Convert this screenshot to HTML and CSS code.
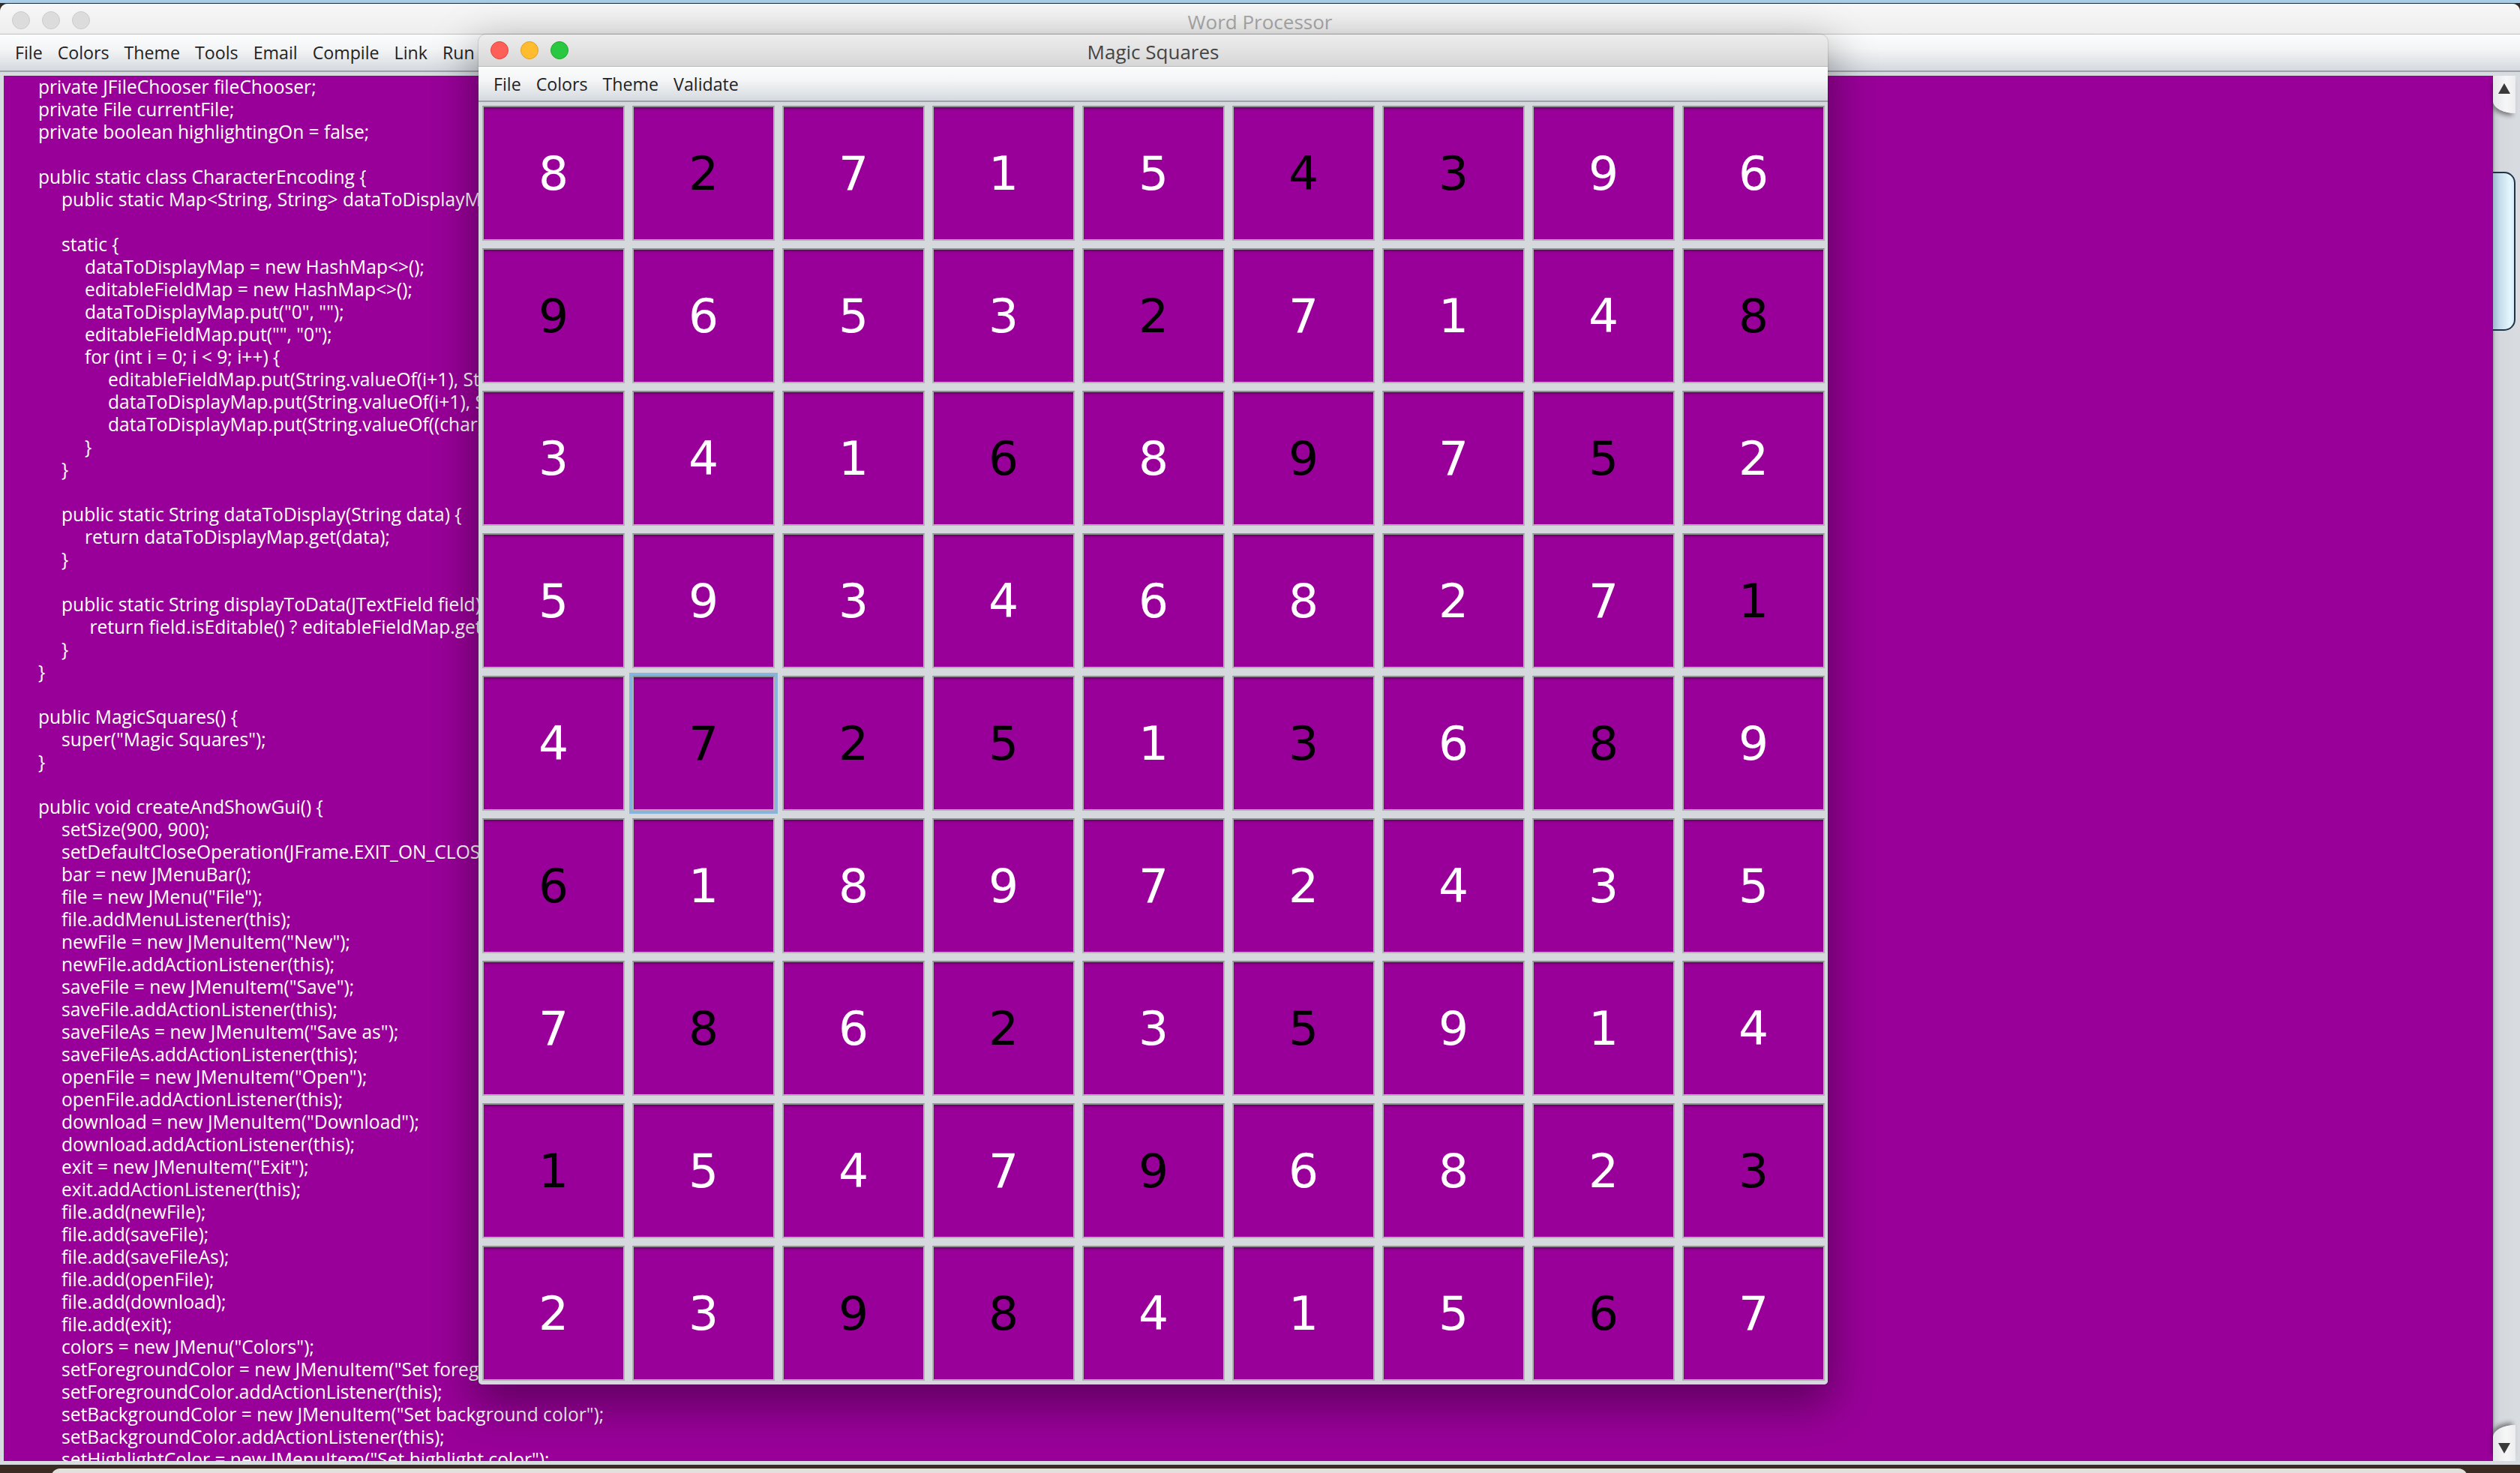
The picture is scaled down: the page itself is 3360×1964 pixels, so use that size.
FILE: index.html
```html
<!DOCTYPE html>
<html>
<head>
<meta charset="utf-8">
<title>Magic Squares</title>
<link rel="stylesheet" href="styles.css">
</head>
<body>
<div class="topstrip"></div>
<div class="wp">
  <div class="titlebar wp-title">
    <div class="lights"><span class="dot grey"></span><span class="dot grey"></span><span class="dot grey"></span></div>
    <div class="title inactive">Word Processor</div>
    <div></div>
  </div>
  <div class="menubar wp-menu"><span>File</span><span>Colors</span><span>Theme</span><span>Tools</span><span>Email</span><span>Compile</span><span>Link</span><span>Run</span></div>
  <div class="pane">
    <div class="textarea"><pre class="code">&#9;private JFileChooser fileChooser;
&#9;private File currentFile;
&#9;private boolean highlightingOn = false;

&#9;public static class CharacterEncoding {
&#9;&#9;public static Map&lt;String, String&gt; dataToDisplayMap, editableFieldMap;

&#9;&#9;static {
&#9;&#9;&#9;dataToDisplayMap = new HashMap&lt;&gt;();
&#9;&#9;&#9;editableFieldMap = new HashMap&lt;&gt;();
&#9;&#9;&#9;dataToDisplayMap.put("0", "");
&#9;&#9;&#9;editableFieldMap.put("", "0");
&#9;&#9;&#9;for (int i = 0; i &lt; 9; i++) {
&#9;&#9;&#9;&#9;editableFieldMap.put(String.valueOf(i+1), String.valueOf(i+1));
&#9;&#9;&#9;&#9;dataToDisplayMap.put(String.valueOf(i+1), String.valueOf(i+1));
&#9;&#9;&#9;&#9;dataToDisplayMap.put(String.valueOf((char) ('A' + i)), String.valueOf(i+1));
&#9;&#9;&#9;}
&#9;&#9;}

&#9;&#9;public static String dataToDisplay(String data) {
&#9;&#9;&#9;return dataToDisplayMap.get(data);
&#9;&#9;}

&#9;&#9;public static String displayToData(JTextField field) {
&#9;&#9;&#9; return field.isEditable() ? editableFieldMap.get(field.getText()) : field.getText();
&#9;&#9;}
&#9;}

&#9;public MagicSquares() {
&#9;&#9;super("Magic Squares");
&#9;}

&#9;public void createAndShowGui() {
&#9;&#9;setSize(900, 900);
&#9;&#9;setDefaultCloseOperation(JFrame.EXIT_ON_CLOSE);
&#9;&#9;bar = new JMenuBar();
&#9;&#9;file = new JMenu("File");
&#9;&#9;file.addMenuListener(this);
&#9;&#9;newFile = new JMenuItem("New");
&#9;&#9;newFile.addActionListener(this);
&#9;&#9;saveFile = new JMenuItem("Save");
&#9;&#9;saveFile.addActionListener(this);
&#9;&#9;saveFileAs = new JMenuItem("Save as");
&#9;&#9;saveFileAs.addActionListener(this);
&#9;&#9;openFile = new JMenuItem("Open");
&#9;&#9;openFile.addActionListener(this);
&#9;&#9;download = new JMenuItem("Download");
&#9;&#9;download.addActionListener(this);
&#9;&#9;exit = new JMenuItem("Exit");
&#9;&#9;exit.addActionListener(this);
&#9;&#9;file.add(newFile);
&#9;&#9;file.add(saveFile);
&#9;&#9;file.add(saveFileAs);
&#9;&#9;file.add(openFile);
&#9;&#9;file.add(download);
&#9;&#9;file.add(exit);
&#9;&#9;colors = new JMenu("Colors");
&#9;&#9;setForegroundColor = new JMenuItem("Set foreground color");
&#9;&#9;setForegroundColor.addActionListener(this);
&#9;&#9;setBackgroundColor = new JMenuItem("Set background color");
&#9;&#9;setBackgroundColor.addActionListener(this);
&#9;&#9;setHighlightColor = new JMenuItem("Set highlight color");
&#9;&#9;setHighlightColor.addActionListener(this);</pre></div>
    <div class="scrollbar">
      <div class="sb-btn sb-up"><svg width="16" height="14" viewBox="0 0 16 14"><polygon points="0,14 8,0 16,14" fill="#3a3a3a"/></svg></div>
      <div class="sb-track"><div class="sb-thumb"></div></div>
      <div class="sb-btn sb-down"><svg width="16" height="14" viewBox="0 0 16 14"><polygon points="0,0 16,0 8,14" fill="#3a3a3a"/></svg></div>
    </div>
  </div>
</div>
<div class="dock"></div>

<div class="ms">
  <div class="titlebar ms-title">
    <div class="lights"><span class="dot red"></span><span class="dot yellow"></span><span class="dot green"></span></div>
    <div class="title active">Magic Squares</div>
    <div></div>
  </div>
  <div class="menubar ms-menu"><span>File</span><span>Colors</span><span>Theme</span><span>Validate</span></div>
  <div class="grid">
    <div class="cell">8</div><div class="cell b">2</div><div class="cell">7</div><div class="cell">1</div><div class="cell">5</div><div class="cell b">4</div><div class="cell b">3</div><div class="cell">9</div><div class="cell">6</div>
    <div class="cell b">9</div><div class="cell">6</div><div class="cell">5</div><div class="cell">3</div><div class="cell b">2</div><div class="cell">7</div><div class="cell">1</div><div class="cell">4</div><div class="cell b">8</div>
    <div class="cell">3</div><div class="cell">4</div><div class="cell">1</div><div class="cell b">6</div><div class="cell">8</div><div class="cell b">9</div><div class="cell">7</div><div class="cell b">5</div><div class="cell">2</div>
    <div class="cell">5</div><div class="cell">9</div><div class="cell">3</div><div class="cell">4</div><div class="cell">6</div><div class="cell">8</div><div class="cell">2</div><div class="cell">7</div><div class="cell b">1</div>
    <div class="cell">4</div><div class="cell b sel">7</div><div class="cell b">2</div><div class="cell b">5</div><div class="cell">1</div><div class="cell b">3</div><div class="cell">6</div><div class="cell b">8</div><div class="cell">9</div>
    <div class="cell b">6</div><div class="cell">1</div><div class="cell">8</div><div class="cell">9</div><div class="cell">7</div><div class="cell">2</div><div class="cell">4</div><div class="cell">3</div><div class="cell">5</div>
    <div class="cell">7</div><div class="cell b">8</div><div class="cell">6</div><div class="cell b">2</div><div class="cell">3</div><div class="cell b">5</div><div class="cell">9</div><div class="cell">1</div><div class="cell">4</div>
    <div class="cell b">1</div><div class="cell">5</div><div class="cell">4</div><div class="cell">7</div><div class="cell b">9</div><div class="cell">6</div><div class="cell">8</div><div class="cell">2</div><div class="cell b">3</div>
    <div class="cell">2</div><div class="cell">3</div><div class="cell b">9</div><div class="cell b">8</div><div class="cell">4</div><div class="cell">1</div><div class="cell">5</div><div class="cell b">6</div><div class="cell">7</div>
  </div>
</div>
</body>
</html>
```

FILE: styles.css
```css
html, body {
  margin: 0;
  padding: 0;
}
body {
  width: 3360px;
  height: 1964px;
  overflow: hidden;
  position: relative;
  background: #3b2b22;
  font-family: "Open Sans", "DejaVu Sans", sans-serif;
}
.topstrip {
  height: 4px;
  background: #a9cce7;
  border-bottom: 1px solid #1d2d3d;
}
.wp {
  height: 1948px;
  display: flex;
  flex-direction: column;
  background: #d9dce1;
  border-radius: 10px 10px 0 0;
  overflow: hidden;
}
.titlebar {
  display: grid;
  grid-template-columns: 1fr auto 1fr;
  align-items: center;
  box-sizing: border-box;
  border-bottom: 1px solid #c2c2c2;
  flex: none;
}
.wp-title {
  height: 41px;
  padding-top: 4px;
  background: linear-gradient(#f7f7f7, #eeeeee);
}
.ms-title {
  height: 43px;
  background: linear-gradient(#ededed, #d7d7d7);
  border-bottom-color: #b9b9b9;
}
.lights {
  display: flex;
  gap: 16px;
  padding-left: 16px;
}
.dot {
  width: 22px;
  height: 22px;
  border-radius: 50%;
  border: 1px solid;
}
.dot.grey { background: #dcdcdc; border-color: #cbcbcb; }
.dot.red { background: #fe5f57; border-color: #e1443d; }
.dot.yellow { background: #febc2e; border-color: #dfa023; }
.dot.green { background: #29c840; border-color: #1daa2c; }
.title {
  font-size: 26px;
  line-height: 30px;
  padding-top: 3px;
}
.title.inactive { color: #a8a8a8; }
.title.active { color: #454545; }
.menubar {
  display: flex;
  align-items: center;
  box-sizing: border-box;
  padding-left: 10px;
  background: linear-gradient(#fbfcfc, #f4f5f6 40%, #d5d9df);
  border-bottom: 2px solid #9ea2a8;
  font-size: 23.2px;
  color: #222222;
  flex: none;
}
.menubar span {
  padding: 0 10px;
}
.wp-menu { height: 50px; }
.ms-menu { height: 47px; }
.pane {
  flex: 1;
  display: flex;
  padding: 5px 6px 5px 5px;
  background: #d8dbe0;
  min-height: 0;
}
.textarea {
  flex: 1;
  background: #990099;
  overflow: hidden;
}
.code {
  margin: 0;
  padding: 0 0 0 15px;
  font-family: "Open Sans", sans-serif;
  font-size: 24.6px;
  line-height: 30px;
  color: #ffffff;
  tab-size: 31px;
  -moz-tab-size: 31px;
  white-space: pre;
}
.scrollbar {
  width: 30px;
  display: flex;
  flex-direction: column;
  background: linear-gradient(to right, #a0a4ab, #c8cbd2 3px, #d5d8dd 10px, #d8dbe0);
}
.sb-btn {
  height: 50px;
  box-sizing: border-box;
  display: flex;
  justify-content: center;
  background: linear-gradient(to right, #e6e7ea, #f7f7f8 60%, #ededef);
  flex: none;
}
.sb-up {
  align-items: flex-start;
  padding-top: 10px;
  border-bottom-left-radius: 30px 16px;
  box-shadow: -2px 5px 6px -2px rgba(0, 0, 0, 0.45);
}
.sb-down {
  height: 48px;
  align-items: flex-end;
  padding-bottom: 10px;
  border-top-left-radius: 30px 16px;
  box-shadow: -2px -5px 6px -2px rgba(0, 0, 0, 0.45);
}
.sb-track {
  flex: 1;
}
.sb-thumb {
  margin-top: 78px;
  height: 212px;
  box-sizing: border-box;
  border: 2px solid #1f3448;
  border-left: none;
  border-radius: 0 15px 15px 0;
  background: linear-gradient(to right, #9fb8ce, #c3dbeb 30%, #e4f6fe 80%, #d6edf8);
}
.dock {
  width: 3222px;
  height: 20px;
  margin: 5px 0 0 68px;
  background: #e3dfdb;
  border-radius: 12px 12px 0 0;
}
.ms {
  position: absolute;
  left: 638px;
  top: 46px;
  width: 1799px;
  height: 1800px;
  display: flex;
  flex-direction: column;
  border-radius: 10px 10px 5px 5px;
  overflow: hidden;
  box-shadow: 0 22px 60px 6px rgba(0, 0, 0, 0.38), 0 0 2px rgba(0, 0, 0, 0.35);
  background: #d5d8dd;
}
.grid {
  display: grid;
  grid-template-columns: repeat(9, 190px);
  grid-auto-rows: 180px;
  gap: 10px;
  padding: 5px 4px 5px 5px;
  background: #d5d8dd;
}
.cell {
  box-sizing: border-box;
  background: #990099;
  border: 2px solid #b1b1b3;
  border-top-color: #8e8e8e;
  box-shadow: inset 0 3px 3px -1px rgba(40, 0, 40, 0.45);
  display: flex;
  align-items: center;
  justify-content: center;
  font-family: "DejaVu Sans", sans-serif;
  font-size: 63px;
  line-height: 1;
  color: #ffffff;
}
.cell.b {
  color: #000000;
}
.cell.sel {
  outline: 4px solid #88b3db;
}
```
